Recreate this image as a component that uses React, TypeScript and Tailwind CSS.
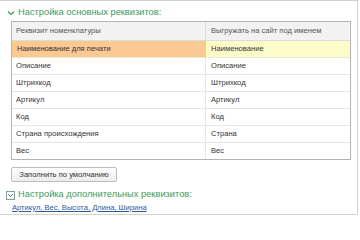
import React from "react";

const rows = [
  ["Наименование для печати", "Наименование"],
  ["Описание", "Описание"],
  ["Штрихкод", "Штрихкод"],
  ["Артикул", "Артикул"],
  ["Код", "Код"],
  ["Страна происхождения", "Страна"],
  ["Вес", "Вес"],
];

const Chevron = () => (
  <svg width="8" height="6" viewBox="0 0 8 6" className="shrink-0">
    <path d="M1 1.5 L4 4.5 L7 1.5" fill="none" stroke="#3d9a57" strokeWidth="1.2" />
  </svg>
);

const App = () => {
  return (
    <div className="w-[360px] h-[216px] bg-white font-['Liberation_Sans',Arial,sans-serif] overflow-hidden">
      <div className="w-[358px] h-[215px] border-t border-r border-b border-[#d2d2d2]">
        {/* Section 1 */}
        <div className="flex items-center h-[16px] mt-[4px] pl-[7px] gap-[3px]">
          <Chevron />
          <span className="text-[9.3px] leading-none text-[#3d9a57]">Настройка основных реквизитов:</span>
        </div>

        <div className="ml-[11px] w-[340px] border border-[#b4b4b4] text-[7.6px] leading-none">
          <div className="grid grid-cols-[194px_1fr] h-[19px] bg-[#f2f2f2] border-b border-[#dcdcdc] text-[#555]">
            <div className="flex items-center pl-[4px] border-r border-[#dcdcdc]">Реквизит номенклатуры</div>
            <div className="flex items-center pl-[5px]">Выгружать на сайт под именем</div>
          </div>
          {rows.map(([a, b], i) => (
            <div
              key={a}
              className={
                i === rows.length - 1
                  ? "grid grid-cols-[194px_1fr] h-[16px] text-[#333]"
                  : "grid grid-cols-[194px_1fr] h-[17px] border-b border-[#e6e6e6] text-[#333]"
              }
            >
              <div
                className={
                  i === 0
                    ? "flex items-center pl-[4px] bg-[#fcc893] border border-dotted border-[#f3d36a]"
                    : "flex items-center pl-[4px] border-r border-[#e6e6e6]"
                }
              >
                {a}
              </div>
              <div className={i === 0 ? "flex items-center pl-[5px] bg-[#fdfbc8]" : "flex items-center pl-[5px]"}>{b}</div>
            </div>
          ))}
        </div>

        <button className="ml-[11px] mt-[5px] w-[106px] h-[15px] border border-[#bdbdbd] rounded-[2px] bg-gradient-to-b from-white to-[#ececec] text-[7.6px] leading-none text-[#333]">
          Заполнить по умолчанию
        </button>

        {/* Section 2 */}
        <div className="flex items-center h-[14px] mt-[4px] pl-[6px] gap-[3px]">
          <div className="w-[9px] h-[9px] border border-[#7f9ea8] flex items-center justify-center">
            <svg width="7" height="5" viewBox="0 0 7 5">
              <path d="M1 1 L3.5 3.5 L6 1" fill="none" stroke="#3d8a57" strokeWidth="1" />
            </svg>
          </div>
          <span className="text-[9.3px] leading-none text-[#3d9a57]">Настройка дополнительных реквизитов:</span>
        </div>
        <div className="pl-[12px] h-[11px] flex items-center">
          <a className="text-[7.6px] leading-none text-[#2a5b9a] underline">Артикул, Вес, Высота, Длина, Ширина</a>
        </div>
      </div>
    </div>
  );
};

export default App;
